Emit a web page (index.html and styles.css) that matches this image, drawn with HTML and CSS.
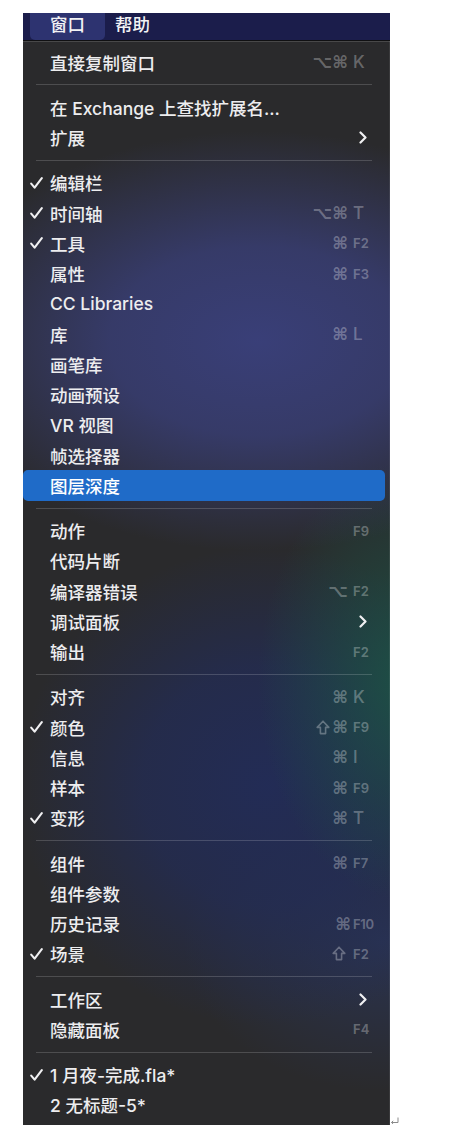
FILE: index.html
```html
<!DOCTYPE html>
<html lang="zh-CN">
<head>
  <meta charset="UTF-8">
  <meta name="viewport" content="width=device-width, initial-scale=1.0">
  <title>窗口菜单</title>
  <link rel="stylesheet" href="styles.css">
</head>
<body>
  <div class="shot">
    <div class="menu-wrap">
      <div class="menubar">
        <span class="menubar-item active">窗口</span>
        <span class="menubar-item">帮助</span>
      </div>

      <div class="menu">
        <div class="item"><span class="mark"></span><span class="label">直接复制窗口</span><span class="keys"><span class="mods">⌥⌘</span><span class="key">K</span></span></div>
        <div class="sep"></div>

        <div class="item"><span class="mark"></span><span class="label">在 Exchange 上查找扩展名...</span></div>
        <div class="item"><span class="mark"></span><span class="label">扩展</span><span class="sub"><svg width="8" height="13" viewBox="0 0 8 13"><path d="M1.5 1.5 L6.5 6.5 L1.5 11.5"/></svg></span></div>
        <div class="sep"></div>

        <div class="item"><span class="mark"><svg width="13" height="12" viewBox="0 0 13 12"><path d="M1.2 6.6 L4.6 10.6 L11.8 1.2"/></svg></span><span class="label">编辑栏</span></div>
        <div class="item"><span class="mark"><svg width="13" height="12" viewBox="0 0 13 12"><path d="M1.2 6.6 L4.6 10.6 L11.8 1.2"/></svg></span><span class="label">时间轴</span><span class="keys"><span class="mods">⌥⌘</span><span class="key">T</span></span></div>
        <div class="item"><span class="mark"><svg width="13" height="12" viewBox="0 0 13 12"><path d="M1.2 6.6 L4.6 10.6 L11.8 1.2"/></svg></span><span class="label">工具</span><span class="keys"><span class="mods">⌘</span><span class="key fn">F2</span></span></div>
        <div class="item"><span class="mark"></span><span class="label">属性</span><span class="keys"><span class="mods">⌘</span><span class="key fn">F3</span></span></div>
        <div class="item"><span class="mark"></span><span class="label">CC Libraries</span></div>
        <div class="item"><span class="mark"></span><span class="label">库</span><span class="keys"><span class="mods">⌘</span><span class="key">L</span></span></div>
        <div class="item"><span class="mark"></span><span class="label">画笔库</span></div>
        <div class="item"><span class="mark"></span><span class="label">动画预设</span></div>
        <div class="item"><span class="mark"></span><span class="label">VR 视图</span></div>
        <div class="item"><span class="mark"></span><span class="label">帧选择器</span></div>
        <div class="item selected"><span class="mark"></span><span class="label">图层深度</span></div>
        <div class="sep"></div>

        <div class="item"><span class="mark"></span><span class="label">动作</span><span class="keys"><span class="key fn">F9</span></span></div>
        <div class="item"><span class="mark"></span><span class="label">代码片断</span></div>
        <div class="item"><span class="mark"></span><span class="label">编译器错误</span><span class="keys"><span class="mods">⌥</span><span class="key fn">F2</span></span></div>
        <div class="item"><span class="mark"></span><span class="label">调试面板</span><span class="sub"><svg width="8" height="13" viewBox="0 0 8 13"><path d="M1.5 1.5 L6.5 6.5 L1.5 11.5"/></svg></span></div>
        <div class="item"><span class="mark"></span><span class="label">输出</span><span class="keys"><span class="key fn">F2</span></span></div>
        <div class="sep"></div>

        <div class="item"><span class="mark"></span><span class="label">对齐</span><span class="keys"><span class="mods">⌘</span><span class="key">K</span></span></div>
        <div class="item"><span class="mark"><svg width="13" height="12" viewBox="0 0 13 12"><path d="M1.2 6.6 L4.6 10.6 L11.8 1.2"/></svg></span><span class="label">颜色</span><span class="keys"><span class="mods"><svg class="shift" width="14" height="15" viewBox="0 0 14 15"><path d="M7 1.2 L12.8 7.4 H9.6 V13.6 H4.4 V7.4 H1.2 Z"/></svg>⌘</span><span class="key fn">F9</span></span></div>
        <div class="item"><span class="mark"></span><span class="label">信息</span><span class="keys"><span class="mods">⌘</span><span class="key">I</span></span></div>
        <div class="item"><span class="mark"></span><span class="label">样本</span><span class="keys"><span class="mods">⌘</span><span class="key fn">F9</span></span></div>
        <div class="item"><span class="mark"><svg width="13" height="12" viewBox="0 0 13 12"><path d="M1.2 6.6 L4.6 10.6 L11.8 1.2"/></svg></span><span class="label">变形</span><span class="keys"><span class="mods">⌘</span><span class="key">T</span></span></div>
        <div class="sep"></div>

        <div class="item"><span class="mark"></span><span class="label">组件</span><span class="keys"><span class="mods">⌘</span><span class="key fn">F7</span></span></div>
        <div class="item"><span class="mark"></span><span class="label">组件参数</span></div>
        <div class="item"><span class="mark"></span><span class="label">历史记录</span><span class="keys"><span class="mods">⌘</span><span class="key fn tight">F10</span></span></div>
        <div class="item"><span class="mark"><svg width="13" height="12" viewBox="0 0 13 12"><path d="M1.2 6.6 L4.6 10.6 L11.8 1.2"/></svg></span><span class="label">场景</span><span class="keys"><span class="mods"><svg class="shift" width="14" height="15" viewBox="0 0 14 15"><path d="M7 1.2 L12.8 7.4 H9.6 V13.6 H4.4 V7.4 H1.2 Z"/></svg></span><span class="key fn">F2</span></span></div>
        <div class="sep"></div>

        <div class="item"><span class="mark"></span><span class="label">工作区</span><span class="sub"><svg width="8" height="13" viewBox="0 0 8 13"><path d="M1.5 1.5 L6.5 6.5 L1.5 11.5"/></svg></span></div>
        <div class="item"><span class="mark"></span><span class="label">隐藏面板</span><span class="keys"><span class="key fn">F4</span></span></div>
        <div class="sep"></div>

        <div class="item"><span class="mark"><svg width="13" height="12" viewBox="0 0 13 12"><path d="M1.2 6.6 L4.6 10.6 L11.8 1.2"/></svg></span><span class="label">1 月夜-完成.fla*</span></div>
        <div class="item"><span class="mark"></span><span class="label">2 无标题-5*</span></div>
      </div>
    </div>

    <!-- paragraph mark left by the document editor -->
    <svg class="para-mark" width="9" height="7" viewBox="0 0 9 7"><path d="M8 0.5 V5.5 H1.5 M3.2 3.8 L1.5 5.5 L3.2 7"/></svg>
  </div>
</body>
</html>
```

FILE: styles.css
```css
body {
  margin: 0;
  background: #ffffff;
  font-family: Inter, "Noto Sans CJK SC", sans-serif;
}

.shot {
  display: flex;
  align-items: flex-end;
  padding: 13px 0 0 23px;
}

.menu-wrap {
  width: 367px;
}

/* Top menu bar */
.menubar {
  display: flex;
  height: 27px;
  padding-left: 7px;
  background: #1b1d4b;
}

.menubar-item {
  display: flex;
  align-items: center;
  padding: 0 10px 6px;
  color: #f2f2f4;
  font-size: 17.5px;
  font-weight: 500;
}

.menubar-item.active {
  width: 75px;
  box-sizing: border-box;
  padding-left: 20px;
  background: #2d3370;
  border-radius: 0 0 5px 5px;
}

/* Dropdown panel */
.menu {
  padding: 6px 0 5px;
  border-top: 1px solid #101012;
  box-shadow: inset 0 1px 0 rgba(255, 255, 255, 0.14), inset -1px 0 0 rgba(255, 255, 255, 0.08);
  background:
    radial-gradient(ellipse 330px 210px at 235px 300px, rgba(58, 64, 124, 0.95) 0%, rgba(58, 64, 124, 0.75) 45%, rgba(58, 64, 124, 0) 100%),
    radial-gradient(ellipse 150px 220px at 385px 640px, rgba(28, 84, 70, 0.9), rgba(28, 84, 70, 0)),
    radial-gradient(ellipse 250px 240px at 245px 745px, rgba(34, 44, 88, 0.95) 0%, rgba(34, 44, 88, 0.7) 50%, rgba(34, 44, 88, 0) 100%),
    radial-gradient(ellipse 200px 150px at 360px 900px, rgba(42, 54, 92, 0.75), rgba(42, 54, 92, 0)),
    #2a2a2c;
}

.item {
  display: flex;
  align-items: center;
  height: 30.25px;
  padding: 0 20px 0 7px;
  color: #ededef;
  font-size: 17.5px;
  font-weight: 500;
  white-space: nowrap;
}

.item.selected {
  margin-right: 5px;
  padding-right: 15px;
  background: #1f6bc8;
  border-radius: 5px;
  color: #ffffff;
}

.mark {
  display: flex;
  align-items: center;
  width: 20px;
  flex: none;
}

.mark svg path {
  fill: none;
  stroke: #f0f0f2;
  stroke-width: 2.1;
  stroke-linecap: round;
  stroke-linejoin: round;
}

.label {
  flex: 1;
}

.keys {
  display: flex;
  align-items: center;
  color: rgba(255, 255, 255, 0.3);
}

.mods {
  display: flex;
  align-items: center;
  font-family: "DejaVu Sans", sans-serif;
  font-size: 17px;
  font-weight: bold;
  margin-right: 5px;
}

.shift {
  margin-right: 2px;
}

.shift path {
  fill: none;
  stroke: rgba(255, 255, 255, 0.3);
  stroke-width: 1.6;
  stroke-linejoin: round;
}

.key {
  width: 17px;
  font-size: 17px;
}

.key.fn {
  font-size: 13px;
  font-weight: 600;
}

.key.tight {
  margin-left: -3px;
  letter-spacing: -0.3px;
}

.sub {
  display: flex;
  align-items: center;
  padding-right: 3px;
}

.sub svg path {
  fill: none;
  stroke: #f0f0f2;
  stroke-width: 2.2;
  stroke-linecap: round;
  stroke-linejoin: round;
}

.sep {
  height: 1px;
  margin: 7px 18px 7px 13px;
  background: rgba(255, 255, 255, 0.17);
}

.para-mark {
  margin: 0 0 1px 0;
}

.para-mark path {
  fill: none;
  stroke: #8a8a8a;
  stroke-width: 1;
}
```
